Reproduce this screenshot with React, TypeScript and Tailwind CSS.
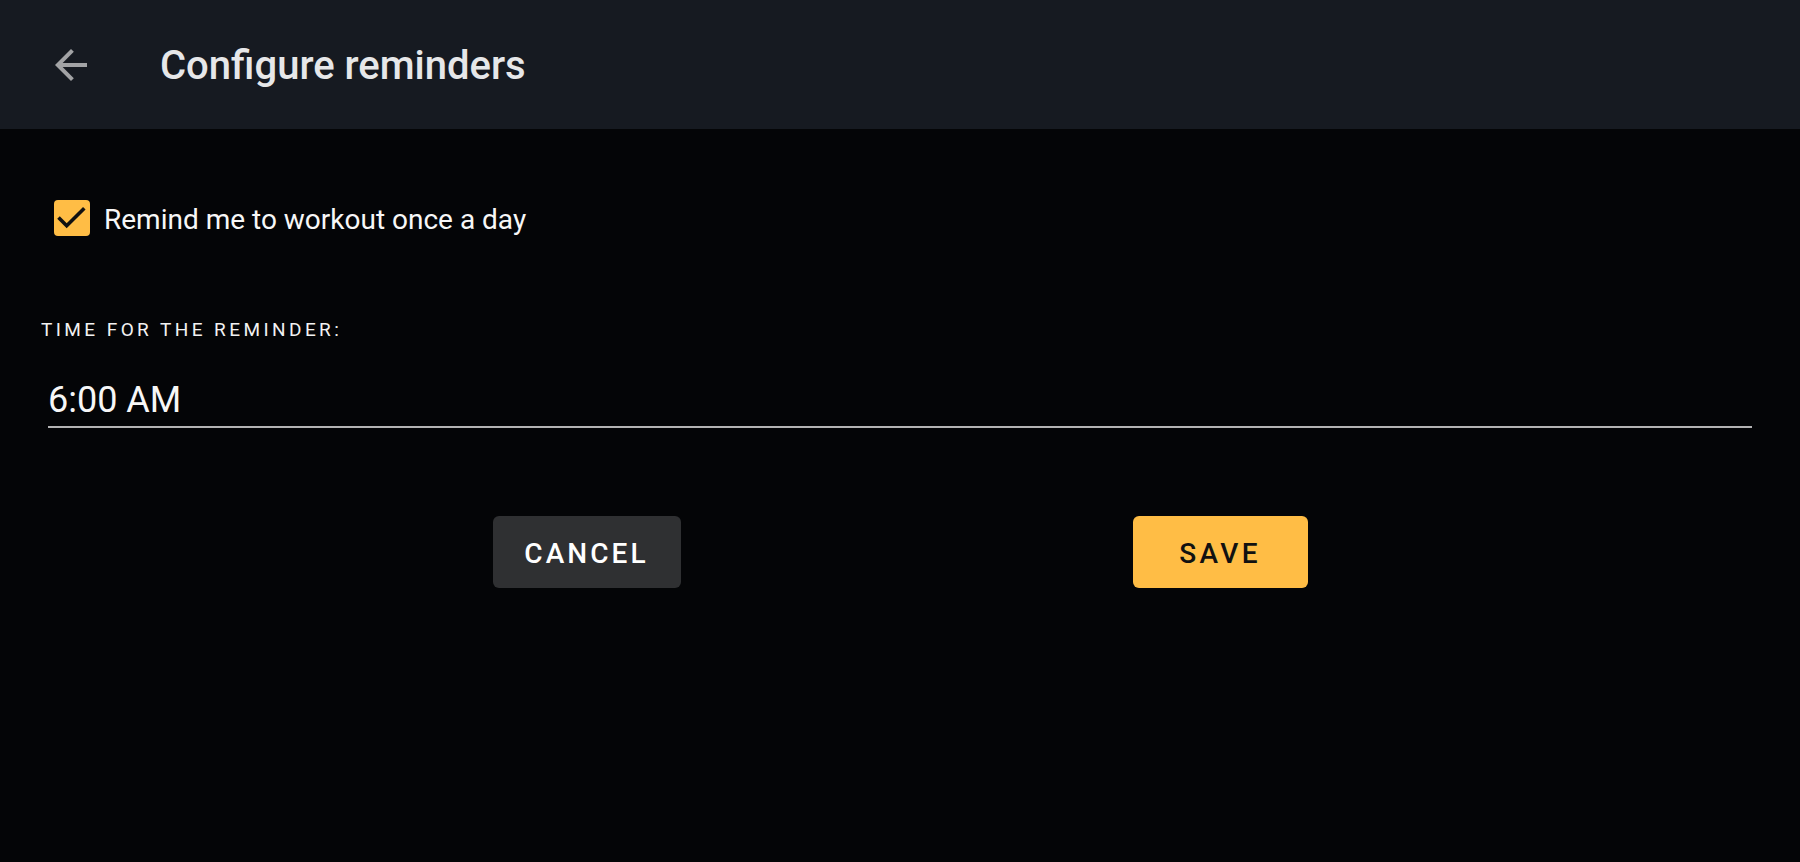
export default function App() {
  return (
    <div className="min-h-[862px] bg-[#040507] font-['Roboto',sans-serif] text-white">
      <header className="flex h-[129px] items-center bg-[#161a21] pl-[47px]">
        <svg viewBox="0 0 24 24" className="h-12 w-12 fill-[#a2a3a5]">
          <path d="M20 11H7.83l5.59-5.59L12 4l-8 8 8 8 1.41-1.41L7.83 13H20v-2z" />
        </svg>
        <h1 className="ml-[65px] pt-[3px] text-[40px] font-medium text-[#e6e7e9]">
          Configure reminders
        </h1>
      </header>

      <main className="px-[41px]">
        <label className="mt-[71px] flex h-[36px] items-center pl-[13px]">
          <span className="flex h-[36px] w-[36px] items-center justify-center rounded-[4px] bg-[#ffbd45]">
            <svg viewBox="0 0 36 36" className="h-[36px] w-[36px]">
              <path
                d="M4.5 17.5L12.7 25.8L30.3 8.3"
                fill="none"
                stroke="#111"
                strokeWidth="3.6"
              />
            </svg>
          </span>
          <span className="ml-[14px] pt-[4px] text-[28px] leading-none text-[#f7f7f7]">
            Remind me to workout once a day
          </span>
        </label>

        <div className="mt-[82px] text-[19px] leading-[24px] tracking-[0.18em] text-[#f2f2f2]">
          TIME FOR THE REMINDER:
        </div>

        <div className="mx-[7px] mt-[36px] border-b-2 border-[#b3b3b3] pb-[4px] text-[36px] leading-[44px] text-[#f7f7f7]">
          6:00 AM
        </div>

        <div className="mt-[88px] flex justify-center gap-[452px]">
          <button className="h-[72px] w-[188px] rounded-[6px] bg-[#2f3032] pt-[4px] text-[28px] font-medium tracking-[0.11em] text-white">
            CANCEL
          </button>
          <button className="h-[72px] w-[175px] rounded-[6px] bg-[#ffbd45] pt-[4px] text-[28px] font-medium tracking-[0.12em] text-[#111]">
            SAVE
          </button>
        </div>
      </main>
    </div>
  );
}
